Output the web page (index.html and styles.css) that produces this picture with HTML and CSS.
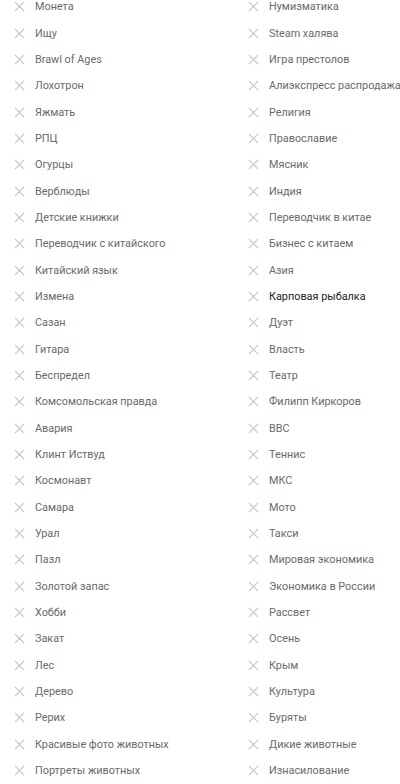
FILE: index.html
```html
<!DOCTYPE html>
<html lang="ru">
  <head>
    <meta charset="utf-8" />
    <title>Интересы</title>
    <meta name="viewport" content="width=device-width, initial-scale=1.0" />
    <link rel="stylesheet" href="styles.css">
  </head>

  <body>
    <!-- tags list, two columns -->
    <ul id="tags" class="tags"></ul>

    <script>
      const left = ['Монета', 'Ищу', 'Brawl of Ages', 'Лохотрон', 'Яжмать', 'РПЦ', 'Огурцы', 'Верблюды',
        'Детские книжки', 'Переводчик с китайского', 'Китайский язык', 'Измена', 'Сазан', 'Гитара',
        'Беспредел', 'Комсомольская правда', 'Авария', 'Клинт Иствуд', 'Космонавт', 'Самара', 'Урал',
        'Пазл', 'Золотой запас', 'Хобби', 'Закат', 'Лес', 'Дерево', 'Рерих', 'Красивые фото животных',
        'Портреты животных'];
      const right = ['Нумизматика', 'Steam халява', 'Игра престолов', 'Алиэкспресс распродажа', 'Религия',
        'Православие', 'Мясник', 'Индия', 'Переводчик в китае', 'Бизнес с китаем', 'Азия',
        'Карповая рыбалка', 'Дуэт', 'Власть', 'Театр', 'Филипп Киркоров', 'BBC', 'Теннис', 'МКС', 'Мото',
        'Такси', 'Мировая экономика', 'Экономика в России', 'Рассвет', 'Осень', 'Крым', 'Культура',
        'Буряты', 'Дикие животные', 'Изнасилование'];
      const active = ['Карповая рыбалка'];

      const cross = `<svg class="remove" viewBox="0 0 12 12"><path d="M1 1L11 11M11 1L1 11"/></svg>`;
      const tags = document.getElementById('tags');

      tags.innerHTML = left
        .map((l, i) => [l, right[i]])
        .flat()
        .map((t) => `<li class="tag${active.includes(t) ? ' active' : ''}">${cross}<span>${t}</span></li>`)
        .join('');
    </script>
  </body>
</html>
```

FILE: styles.css
```css
html,
body {
  margin: 0;
  background: #fff;
  overflow: hidden;
}
body {
  font-family: Roboto, 'Noto Sans', sans-serif;
  font-size: 10.85px;
  color: #6a6a6a;
}
.tags {
  list-style: none;
  margin: -6.5px 0 0;
  padding: 0;
  display: grid;
  grid-template-columns: 234px 166px;
  grid-auto-rows: 26.345px;
}
.tag {
  display: flex;
  align-items: center;
  gap: 10px;
  padding-left: 14px;
  white-space: nowrap;
  min-width: 0;
}
.tag .remove {
  flex: none;
  width: 11px;
  height: 11px;
  fill: none;
  stroke: #c2c2c2;
  stroke-width: 1.2;
}
.tag.active {
  color: #222;
}
```
